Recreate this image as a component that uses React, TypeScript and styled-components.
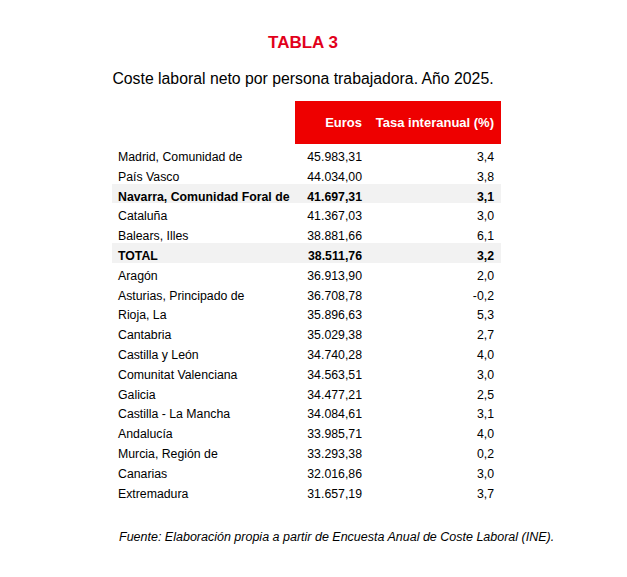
import React from "react"
import styled, { createGlobalStyle } from "styled-components"

const GlobalStyle = createGlobalStyle`
  body {
    margin: 0;
    background: #fff;
    font-family: "Liberation Sans", Arial, sans-serif;
    color: #000;
  }
`

const Page = styled.div`
  width: 627px;
  min-height: 577px;
  padding: 33px 0 0 112px;
  box-sizing: border-box;
`

const Heading = styled.div`
  width: 382px;
  text-align: center;
`

const Title = styled.h1`
  margin: 0;
  font-size: 17px;
  line-height: 20px;
  font-weight: 700;
  color: #e2001a;
`

const Subtitle = styled.h2`
  margin: 16px 0 0;
  font-size: 15.8px;
  line-height: 20px;
  font-weight: 400;
`

const Table = styled.div`
  width: 389px;
  margin-top: 12px;
`

const HeadRow = styled.div`
  display: grid;
  grid-template-columns: 183px 72px 134px;
  height: 43px;
  align-items: center;
`

const HeadCell = styled.div<{ $red?: boolean }>`
  height: 100%;
  display: flex;
  align-items: center;
  justify-content: flex-end;
  background: ${(p) => (p.$red ? "#ee0000" : "transparent")};
  color: #fff;
  font-size: 13px;
  font-weight: 700;
  padding-right: 5px;
  &:last-child {
    padding-right: 7px;
  }
`

const Row = styled.div<{ $shade?: boolean }>`
  display: grid;
  grid-template-columns: 183px 72px 134px;
  height: 19.8px;
  box-sizing: border-box;
  padding-top: 7px;
  background: ${(p) => (p.$shade ? "#f2f2f2" : "transparent")};
  font-size: 12.3px;
  line-height: 12.8px;
  font-weight: ${(p) => (p.$shade ? 700 : 400)};
`

const Cell = styled.div<{ $align?: "left" | "right" }>`
  text-align: ${(p) => p.$align ?? "left"};
  white-space: nowrap;
  padding: 0 5px 0 6px;
  &:last-child {
    padding-right: 7px;
  }
`

const Source = styled.p`
  margin: 30px 0 0 7px;
  font-size: 12.5px;
  line-height: 15px;
  font-style: italic;
  white-space: nowrap;
`

const rows: [string, string, string, boolean?][] = [
  ["Madrid, Comunidad de", "45.983,31", "3,4"],
  ["País Vasco", "44.034,00", "3,8"],
  ["Navarra, Comunidad Foral de", "41.697,31", "3,1", true],
  ["Cataluña", "41.367,03", "3,0"],
  ["Balears, Illes", "38.881,66", "6,1"],
  ["TOTAL", "38.511,76", "3,2", true],
  ["Aragón", "36.913,90", "2,0"],
  ["Asturias, Principado de", "36.708,78", "-0,2"],
  ["Rioja, La", "35.896,63", "5,3"],
  ["Cantabria", "35.029,38", "2,7"],
  ["Castilla y León", "34.740,28", "4,0"],
  ["Comunitat Valenciana", "34.563,51", "3,0"],
  ["Galicia", "34.477,21", "2,5"],
  ["Castilla - La Mancha", "34.084,61", "3,1"],
  ["Andalucía", "33.985,71", "4,0"],
  ["Murcia, Región de", "33.293,38", "0,2"],
  ["Canarias", "32.016,86", "3,0"],
  ["Extremadura", "31.657,19", "3,7"],
]

export default function App() {
  return (
    <>
      <GlobalStyle />
      <Page>
        <Heading>
          <Title>TABLA 3</Title>
          <Subtitle>Coste laboral neto por persona trabajadora. Año 2025.</Subtitle>
        </Heading>
        <Table>
          <HeadRow>
            <HeadCell />
            <HeadCell $red>Euros</HeadCell>
            <HeadCell $red>Tasa interanual (%)</HeadCell>
          </HeadRow>
          {rows.map(([name, euros, rate, shade]) => (
            <Row key={name} $shade={shade}>
              <Cell>{name}</Cell>
              <Cell $align="right">{euros}</Cell>
              <Cell $align="right">{rate}</Cell>
            </Row>
          ))}
        </Table>
        <Source>Fuente: Elaboración propia a partir de Encuesta Anual de Coste Laboral (INE).</Source>
      </Page>
    </>
  )
}
